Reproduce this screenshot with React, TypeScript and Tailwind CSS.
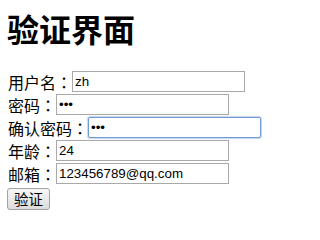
import React from 'react';

const cjk = { fontFamily: '"Noto Sans CJK SC", "Liberation Sans", sans-serif' };

interface FieldProps {
  label: string;
  value: string;
  type?: string;
  focused?: boolean;
}

const Field: React.FC<FieldProps> = ({ label, value, type = 'text', focused }) => (
  <div className="flex h-[23px] items-center">
    <span className="text-[16px] leading-[16px] text-black whitespace-nowrap">
      {label}
      <span className="[font-family:'Noto_Sans_CJK_TC',sans-serif]">：</span>
    </span>
    <input
      type={type}
      value={value}
      readOnly
      tabIndex={-1}
      className={`h-[21px] w-[173px] shrink-0 bg-white px-[2px] text-[13.3333px] text-black outline-none [font-family:'Liberation_Sans',Arial,sans-serif] ${
        focused
          ? 'border border-[#729ad6] rounded-[2px] shadow-[0_0_1px_1px_#c4d6f0]'
          : 'border border-[#a9a9a9]'
      }`}
    />
  </div>
);

export default function App() {
  return (
    <div className="bg-white p-[8px] w-[305px] h-[228px]" style={cjk}>
      <h1 className="mt-[4px] -ml-[1px] text-[32px] leading-[32px] font-bold text-black">验证界面</h1>
      <form className="mt-[26px] flex flex-col" onSubmit={e => e.preventDefault()}>
        <Field label="用户名" value="zh" />
        <Field label="密码" value="123" type="password" />
        <Field label="确认密码" value="123" type="password" focused />
        <Field label="年龄" value="24" />
        <Field label="邮箱" value="123456789@qq.com" />
        <div className="mt-[1px]">
          <button
            type="button"
            className="-ml-[1px] h-[22px] w-[43px] rounded-[3px] border border-[#a3a3a3] bg-gradient-to-b from-[#f7f7f7] to-[#dcdcdc] text-[14.5px] leading-[18px] text-black"
          >
            验证
          </button>
        </div>
      </form>
    </div>
  );
}
